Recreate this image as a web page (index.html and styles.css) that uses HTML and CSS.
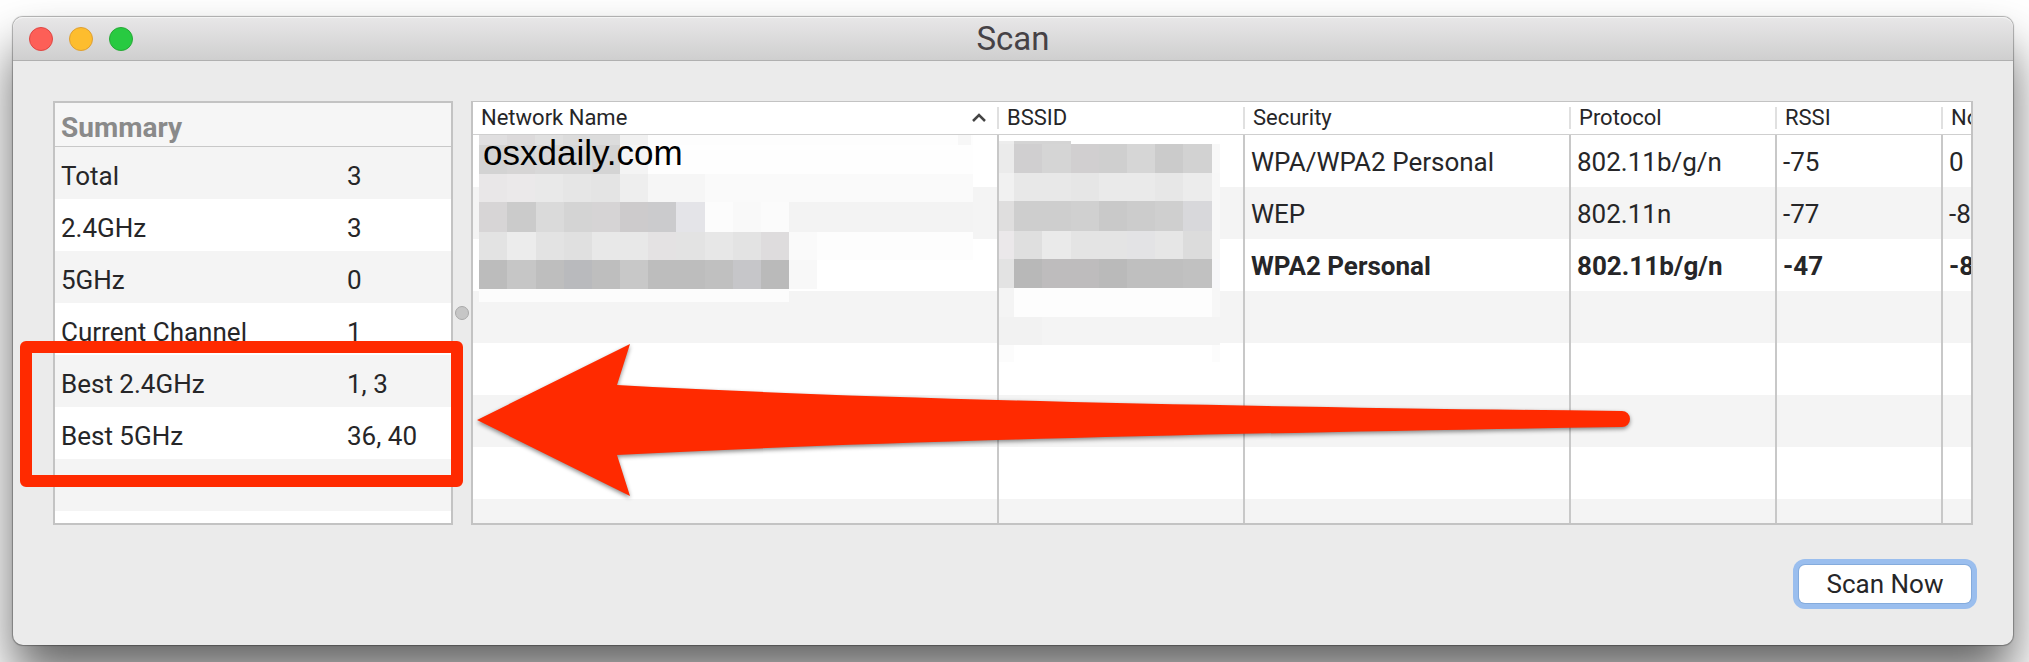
FILE: index.html
```html
<!DOCTYPE html>
<html lang="en">
<head>
  <meta charset="UTF-8" />
  <meta name="viewport" content="width=device-width, initial-scale=1.0"/>
  <title>Scan</title>
  <link rel="stylesheet" href="styles.css">
</head>
<body>
  <div class="window">
    <header class="titlebar">
      <div class="lights">
        <button class="light red" aria-label="Close"></button>
        <button class="light yellow" aria-label="Minimize"></button>
        <button class="light green" aria-label="Zoom"></button>
      </div>
      <h1 class="title">Scan</h1>
    </header>

    <main class="content">
      <section class="panel summary">
        <table class="summary-table">
          <colgroup>
            <col class="col-label">
            <col>
          </colgroup>
          <thead>
            <tr><th colspan="2">Summary</th></tr>
          </thead>
          <tbody>
            <tr><td>Total</td><td>3</td></tr>
            <tr><td>2.4GHz</td><td>3</td></tr>
            <tr><td>5GHz</td><td>0</td></tr>
            <tr><td>Current Channel</td><td>1</td></tr>
            <tr><td>Best 2.4GHz</td><td>1, 3</td></tr>
            <tr><td>Best 5GHz</td><td>36, 40</td></tr>
            <tr><td></td><td></td></tr>
            <tr><td></td><td></td></tr>
          </tbody>
        </table>
      </section>

      <div class="splitter"></div>

      <section class="panel networks">
        <table class="network-table">
          <colgroup>
            <col>
            <col class="col-bssid">
            <col class="col-security">
            <col class="col-protocol">
            <col class="col-rssi">
            <col class="col-noise">
          </colgroup>
          <thead>
            <tr>
              <th>
                <div class="sorted">
                  Network Name
                  <svg width="16" height="10" viewBox="0 0 16 10"><path d="M2 8 L8 2 L14 8" fill="none" stroke="#444" stroke-width="2.5"/></svg>
                </div>
              </th>
              <th>BSSID</th>
              <th>Security</th>
              <th>Protocol</th>
              <th>RSSI</th>
              <th>Noise</th>
            </tr>
          </thead>
          <tbody>
            <tr><td></td><td></td><td>WPA/WPA2 Personal</td><td>802.11b/g/n</td><td>-75</td><td>0</td></tr>
            <tr><td></td><td></td><td>WEP</td><td>802.11n</td><td>-77</td><td>-8</td></tr>
            <tr class="current"><td></td><td></td><td>WPA2 Personal</td><td>802.11b/g/n</td><td>-47</td><td>-8</td></tr>
            <tr><td></td><td></td><td></td><td></td><td></td><td></td></tr>
            <tr><td></td><td></td><td></td><td></td><td></td><td></td></tr>
            <tr><td></td><td></td><td></td><td></td><td></td><td></td></tr>
            <tr><td></td><td></td><td></td><td></td><td></td><td></td></tr>
            <tr><td></td><td></td><td></td><td></td><td></td><td></td></tr>
          </tbody>
        </table>
        <svg class="mosaic mosaic-name" id="mosaicName" width="494" height="168"></svg>
        <svg class="mosaic mosaic-bssid" id="mosaicBssid" width="221" height="221"></svg>
        <span class="watermark">osxdaily.com</span>
      </section>

      <div class="highlight"></div>
      <svg class="arrow" width="1164" height="164" viewBox="0 0 1164 164">
        <path d="M3 80 L156 4 L143 45 Q 480 64 1148 71 A8 8 0 0 1 1148 87 Q 480 97 143 115 L156 156 Z" fill="#ff2a00"/>
      </svg>
    </main>

    <footer class="footer">
      <button class="scan">Scan Now</button>
    </footer>
  </div>

  <script src="mosaic.js"></script>
</body>
</html>
```
FILE: styles.css
```css
* {
  box-sizing: border-box;
}
body {
  margin: 0;
  padding: 17px 16px 17px 13px;
  height: 100vh;
  overflow: hidden;
  background: #fff;
  color: #262628;
  font-family: Roboto, "Liberation Sans", sans-serif;
  font-size: 26px;
}
.window {
  display: flex;
  flex-direction: column;
  height: 100%;
  background: #ebebeb;
  border-radius: 10px;
  box-shadow: 0 0 1px 1px rgba(0, 0, 0, 0.3), 0 32px 50px rgba(0, 0, 0, 0.6);
}

/* title bar */
.titlebar {
  position: relative;
  display: flex;
  align-items: center;
  justify-content: center;
  height: 44px;
  border-radius: 10px 10px 0 0;
  border-bottom: 1px solid #b0b0b0;
  background: linear-gradient(#e8e7e8, #cfcfcf);
  box-shadow: inset 0 1px 0 #f4f4f4;
}
.lights {
  position: absolute;
  left: 16px;
  display: flex;
  gap: 16px;
}
.light {
  width: 24px;
  height: 24px;
  padding: 0;
  border-radius: 50%;
  border: 1px solid;
}
.red {
  background: #fd5f57;
  border-color: #df4744;
}
.yellow {
  background: #fdbd2e;
  border-color: #de9f33;
}
.green {
  background: #28ca41;
  border-color: #27a937;
}
.title {
  margin: 0;
  font-size: 33px;
  line-height: 40px;
  font-weight: 400;
  color: #464246;
}

/* panels */
.content {
  position: relative;
  display: flex;
  flex: 1;
  min-height: 0;
  padding: 40px 40px 0 40px;
}
.panel {
  overflow: hidden;
  background: #fff;
  border: 2px solid #c3c3c3;
}
.summary {
  width: 400px;
}
.networks {
  position: relative;
  flex: 1;
  border-top-width: 1px;
}
.splitter {
  display: flex;
  align-items: center;
  width: 18px;
  padding-left: 2px;
}
.splitter::before {
  content: "";
  width: 12px;
  height: 12px;
  border-radius: 50%;
  border: 1px solid #a9a9a9;
  background: #c6c6c6;
}
table {
  width: 100%;
  table-layout: fixed;
  border-collapse: separate;
  border-spacing: 0;
}
th, td {
  padding: 0;
  overflow: hidden;
  white-space: nowrap;
  text-align: left;
}
td {
  height: 52px;
  padding-top: 2px;
}
.summary-table th {
  height: 44px;
  padding: 6px 0 0 6px;
  border-bottom: 1px solid #c8c8c8;
  background: #f6f6f6;
  color: #8a8a8a;
  font-size: 28px;
  line-height: 32px;
}
.summary-table td {
  padding: 6px 0 0 6px;
}
.summary-table tbody tr:nth-child(odd) {
  background: #f4f4f4;
}
.col-label {
  width: 286px;
}
.col-bssid {
  width: 246px;
}
.col-security {
  width: 326px;
}
.col-protocol {
  width: 206px;
}
.col-rssi {
  width: 166px;
}
.col-noise {
  width: 28px;
}
.network-table th {
  height: 33px;
  padding-left: 8px;
  border-bottom: 1px solid #cfcfcf;
  font-size: 22px;
  line-height: 32px;
  font-weight: 400;
  background: linear-gradient(#e0e0e0, #e0e0e0) right 5px / 2px 22px no-repeat;
}
.network-table td {
  padding-left: 6px;
  border-right: 2px solid #c8c8c8;
}
.network-table th:last-child {
  background: none;
}
.network-table td:last-child {
  border-right: none;
}
.network-table tbody tr:nth-child(even) {
  background: #f4f4f4;
}
.sorted {
  display: flex;
  align-items: center;
  justify-content: space-between;
  padding-right: 12px;
}
.current {
  font-weight: 700;
}

/* blurred cells and markup drawn on top */
.mosaic {
  position: absolute;
}
.mosaic-name {
  left: 6px;
  top: 33px;
}
.mosaic-bssid {
  right: 751px;
  top: 39px;
}
.watermark {
  position: absolute;
  left: 10px;
  top: 31px;
  font-family: "Liberation Sans", Arial, sans-serif;
  font-size: 35px;
  line-height: 40px;
  color: #000;
}
.highlight {
  position: absolute;
  left: 7px;
  top: 280px;
  width: 443px;
  height: 146px;
  border: 12px solid #ff2a00;
  border-radius: 6px;
}
.arrow {
  position: absolute;
  left: 461px;
  top: 279px;
  filter: drop-shadow(0 2px 2px rgba(0, 0, 0, 0.45));
}

/* footer */
.footer {
  display: flex;
  justify-content: flex-end;
  padding: 40px 42px 42px;
}
.scan {
  width: 172px;
  height: 38px;
  padding: 0;
  border: none;
  border-radius: 6px;
  background: #fff;
  box-shadow: 0 0 0 1px #84abdc, 0 0 0 6px #9abeee;
  color: #262628;
  font-family: inherit;
  font-size: 26px;
  line-height: 38px;
}
```
FILE: mosaic.js
```js
// each band: [top, height, [[left, width, color], ...]]
const nameBands = [
  [0, 10, [[0, 28, "#e0dfe0"], [28, 28, "#dcdadb"], [56, 28, "#e0e0e0"], [84, 57, "#dcdcdc"], [141, 28, "#f1f1f1"], [169, 325, "#fdfdfd"], [479, 13, "#f7f7f7"]]],
  [10, 29, [[0, 28, "#d3d3d3"], [28, 28, "#d6d5d5"], [56, 57, "#d8d8d8"], [113, 28, "#d4d4d4"], [141, 28, "#f4f4f4"], [169, 325, "#fefefe"]]],
  [39, 28, [[0, 28, "#e9e7e8"], [28, 28, "#ebe9ea"], [56, 28, "#e9e9e9"], [84, 28, "#e6e6e6"], [112, 29, "#e4e4e4"], [141, 28, "#eeeeee"], [169, 57, "#f6f6f6"], [226, 268, "#fafafa"]]],
  [67, 30, [[0, 28, "#d7d5d6"], [28, 29, "#cbcbcb"], [57, 28, "#dadada"], [85, 28, "#d4d4d4"], [113, 28, "#d6d4d5"], [141, 28, "#cdcbcc"], [169, 28, "#cbcbcd"], [197, 29, "#e4e4e8"], [226, 28, "#fcfcfc"], [254, 28, "#f9f9f9"], [282, 28, "#fbfbfb"], [310, 184, "#f3f3f3"]]],
  [97, 28, [[0, 28, "#e3e3e3"], [28, 29, "#ececec"], [57, 28, "#e3e3e3"], [85, 28, "#e0e0e0"], [113, 56, "#e8e8e8"], [169, 28, "#e4e2e3"], [197, 29, "#e3e3e3"], [226, 28, "#e7e7e7"], [254, 28, "#e3e3e3"], [282, 28, "#dedcdd"], [310, 28, "#fafafa"], [338, 156, "#fdfdfd"]]],
  [125, 29, [[0, 28, "#bcbcbc"], [28, 29, "#c6c6c6"], [57, 28, "#bebebe"], [85, 28, "#b9babd"], [113, 28, "#bebebe"], [141, 28, "#c8c8c8"], [169, 57, "#bdbdbd"], [226, 28, "#c0c0c0"], [254, 28, "#c6c6c9"], [282, 28, "#bababa"], [310, 28, "#f8f8f8"], [338, 156, "#ffffff"]]],
  [154, 13, [[0, 310, "#fcfcfc"]]]
];

const bssidBands = [
  [0, 3, [[0, 15, "#ededed"], [15, 57, "#d4d4d4"]]],
  [3, 29, [[0, 15, "#ebebeb"], [15, 28, "#d0cfd0"], [43, 29, "#d5d5d5"], [72, 28, "#d1cfd0"], [100, 28, "#cfcfcf"], [128, 28, "#d6d6d6"], [156, 28, "#cbcbcb"], [184, 29, "#d2d2d2"], [213, 8, "#f8f8f8"]]],
  [32, 28, [[0, 15, "#f1f1f1"], [15, 57, "#e8e8e8"], [72, 28, "#e6e6e6"], [100, 56, "#eaeaea"], [156, 28, "#e7e7e7"], [184, 29, "#ececec"], [213, 8, "#f7f7f7"]]],
  [60, 30, [[0, 15, "#dfdede"], [15, 57, "#cecece"], [72, 28, "#d0d0d0"], [100, 28, "#c9c9c9"], [128, 28, "#cccccc"], [156, 28, "#cfcfcf"], [184, 29, "#d8d8db"], [213, 8, "#f7f7f7"]]],
  [90, 28, [[0, 15, "#ebe8ea"], [15, 28, "#dfdfdf"], [43, 29, "#eaeaea"], [72, 56, "#e4e4e4"], [128, 28, "#e3e3e5"], [156, 28, "#e6e6e6"], [184, 29, "#dcdcdc"], [213, 8, "#f7f7f7"]]],
  [118, 29, [[0, 15, "#e3e3e3"], [15, 28, "#b8b8b8"], [43, 57, "#bebcbd"], [100, 28, "#bababa"], [128, 56, "#bfbfbf"], [184, 29, "#c1c1c1"], [213, 8, "#f7f7f9"]]],
  [147, 29, [[0, 15, "#f4f4f4"], [15, 198, "#fdfdfd"], [213, 8, "#f7f7f7"]]],
  [176, 28, [[0, 43, "#f2f2f2"], [43, 178, "#f4f4f4"]]],
  [204, 17, [[0, 15, "#fcfcfc"], [213, 8, "#fcfcfc"]]]
];

function drawMosaic(id, bands) {
  const svg = document.getElementById(id);
  let cells = "";
  bands.forEach(([y, h, list]) => {
    list.forEach(([x, w, color]) => {
      cells += `<rect x="${x}" y="${y}" width="${w}" height="${h}" fill="${color}"/>`;
    });
  });
  svg.innerHTML = cells;
}

drawMosaic("mosaicName", nameBands);
drawMosaic("mosaicBssid", bssidBands);
```
